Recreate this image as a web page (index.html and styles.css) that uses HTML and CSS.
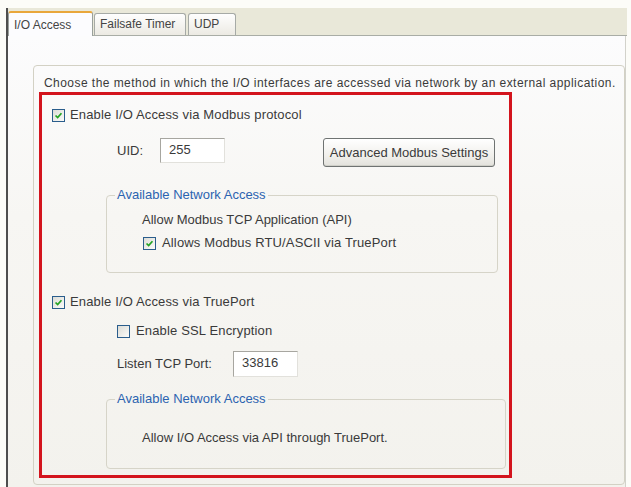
FILE: index.html
```
<!DOCTYPE html>
<html>
<head>
  <meta charset="UTF-8">
  <title>I/O Access</title>
  <link rel="stylesheet" href="styles.css">
</head>
<body>
  <div id="window">
    <div class="tabbar">
      <div class="tab active">I/O Access</div>
      <div class="tab">Failsafe Timer</div>
      <div class="tab">UDP</div>
    </div>

    <div class="panel">
      <div class="box">
        <p class="intro">Choose the method in which the I/O interfaces are accessed via network by an external application.</p>

        <div class="highlight">
          <label class="chk-row">
            <span class="cb checked"><svg viewBox="0 0 13 13"><path d="M3 6.5 L5.5 9 L10 3.8" /></svg></span>
            Enable I/O Access via Modbus protocol
          </label>

          <div class="uid-row">
            <span class="uid-label">UID:</span>
            <div class="field uid">255</div>
            <div class="button">Advanced Modbus Settings</div>
          </div>

          <fieldset class="group first">
            <legend>Available Network Access</legend>
            <div class="group-line">Allow Modbus TCP Application (API)</div>
            <label class="chk-row small">
              <span class="cb checked"><svg viewBox="0 0 13 13"><path d="M3 6.5 L5.5 9 L10 3.8" /></svg></span>
              Allows Modbus RTU/ASCII via TruePort
            </label>
          </fieldset>

          <label class="chk-row trueport">
            <span class="cb checked"><svg viewBox="0 0 13 13"><path d="M3 6.5 L5.5 9 L10 3.8" /></svg></span>
            Enable I/O Access via TruePort
          </label>

          <label class="chk-row ssl">
            <span class="cb"></span>
            Enable SSL Encryption
          </label>

          <div class="port-row">
            <span class="port-label">Listen TCP Port:</span>
            <div class="field port">33816</div>
          </div>

          <fieldset class="group second">
            <legend>Available Network Access</legend>
            <div class="group-line">Allow I/O Access via API through TruePort.</div>
          </fieldset>
        </div>
      </div>
    </div>
  </div>
</body>
</html>
```

FILE: styles.css
```
html, body {
  margin: 0;
  padding: 0;
}
body {
  width: 631px;
  height: 487px;
  overflow: hidden;
  background: #fcfcf8;
  font-family: "Liberation Sans", Arial, sans-serif;
  font-size: 13px;
  color: #3a3a3a;
}
#window {
  margin: 8px 0 0 6px;
  border-left: 2px solid #4e4e4e;
  width: 621px;
}

/* tabs */
.tabbar {
  display: flex;
  align-items: flex-end;
  height: 27px;
  background: #e9e8d9;
  border-bottom: 1px solid #a9ada6;
  width: 619px;
}
.tab {
  height: 21px;
  line-height: 21px;
  padding: 0 5px;
  font-size: 12px;
  color: #444;
  background: linear-gradient(#fefefe, #eceae3);
  border: 1px solid #a6aaa6;
  border-bottom: none;
  border-radius: 3px 3px 0 0;
  margin-right: 1px;
}
.tab:nth-child(2) { width: 80px; }
.tab:nth-child(3) { width: 36px; margin-left: 1px; }
.tab.active {
  width: 73px;
  height: 23px;
  line-height: 24px;
  background: #fcfcfe;
  border-color: #9aa09c;
  border-top: 2px solid #e9a73b;
  margin-bottom: -1px;
  position: relative;
}

/* page */
.panel {
  height: 451px;
  width: 618px;
  background: linear-gradient(#fcfcfd, #f7f6f3 40%, #f3f2ed);
  border-right: 1px solid #d2d2cb;
  padding: 29px 0 0 25px;
  box-sizing: border-box;
}
.box {
  width: 592px;
  height: 420px;
  box-sizing: border-box;
  border: 1px solid #d3d1c4;
  border-radius: 4px;
  padding: 9px 0 0 5px;
}
.intro {
  margin: 0 0 1px 5px;
  line-height: 16px;
  font-size: 12px;
  letter-spacing: 0.45px;
  white-space: nowrap;
}

.highlight {
  width: 473px;
  height: 386px;
  box-sizing: border-box;
  border: 3px solid #d3141d;
  padding: 0 0 0 10px;
}

.chk-row {
  display: flex;
  align-items: center;
  gap: 5px;
  height: 16px;
  line-height: 16px;
  margin-top: 12px;
  letter-spacing: 0.15px;
}
.cb {
  width: 11px;
  height: 11px;
  border: 1px solid #2a5d8c;
  background: linear-gradient(135deg, #dcdcd6, #fbfbf9);
  display: inline-block;
  flex: none;
}
.cb svg {
  display: block;
  width: 11px;
  height: 11px;
}
.cb svg path {
  fill: none;
  stroke: #23a322;
  stroke-width: 2;
}

.uid-row {
  display: flex;
  align-items: flex-start;
  margin: 15px 0 0 65px;
}
.uid-label {
  width: 43px;
  line-height: 25px;
}
.field {
  box-sizing: border-box;
  background: #fff;
  border: 1px solid #a7a6a0;
  border-right-color: #e2e1dc;
  border-bottom-color: #e2e1dc;
  padding: 3px 0 0 8px;
  line-height: 16px;
}
.uid {
  width: 65px;
  height: 25px;
}
.button {
  margin-left: 98px;
  width: 172px;
  height: 29px;
  box-sizing: border-box;
  border: 1px solid #6f7372;
  border-radius: 3px;
  background: linear-gradient(#ffffff, #f1f0ec 60%, #e3e2dc);
  box-shadow: inset 0 -1px 0 #cfcfc8;
  text-align: center;
  line-height: 27px;
}

.group {
  margin: 20px 0 0 54px;
  padding: 0 0 0 8px;
  border: 1px solid #d6d4c8;
  border-radius: 4px;
  min-width: 0;
}
.group legend {
  padding: 0 2px;
  color: #2c63b0;
  line-height: 16px;
}
.group.first {
  width: 382px;
  padding-bottom: 21px;
}
.group.second {
  width: 390px;
  margin-top: 14px;
  padding-bottom: 22px;
}
.group-line {
  line-height: 16px;
  margin: 9px 0 0 27px;
}
.group.second .group-line {
  margin-top: 23px;
}
.chk-row.small {
  margin: 7px 0 0 28px;
  gap: 6px;
}
.chk-row.trueport {
  margin-top: 21px;
}
.chk-row.ssl {
  margin: 13px 0 0 65px;
  gap: 6px;
}
.port-row {
  display: flex;
  align-items: flex-start;
  margin: 12px 0 0 65px;
}
.port-label {
  width: 116px;
  line-height: 26px;
}
.port {
  width: 65px;
  height: 26px;
}
```
